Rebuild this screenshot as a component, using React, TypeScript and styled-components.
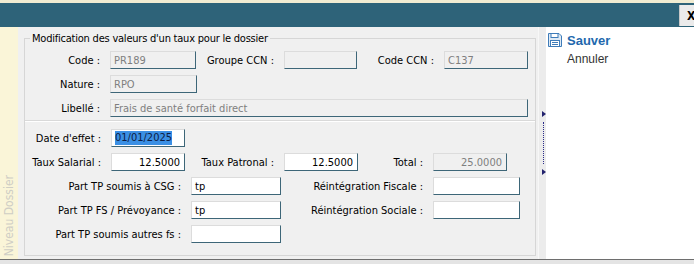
import React from 'react';
import styled, { createGlobalStyle } from 'styled-components';

const GlobalStyle = createGlobalStyle`
  html, body {
    margin: 0;
    padding: 0;
    background: #ffffff;
  }
  body {
    font-family: Tahoma, "DejaVu Sans Condensed", "DejaVu Sans", sans-serif;
    font-stretch: condensed;
    font-size: 11px;
    color: #000;
  }
`;

const Window = styled.div`
  width: 694px;
  height: 264px;
  display: flex;
  flex-direction: column;
  overflow: hidden;
`;

const TopStrip = styled.div`
  height: 3px;
  background: #f1ecd2;
`;

const TitleBar = styled.div`
  height: 24px;
  background: #2e6379;
  display: flex;
  align-items: center;
  justify-content: flex-end;
`;

const CloseButton = styled.div`
  width: 15px;
  height: 21px;
  margin-top: 1px;
  background: #ebebeb;
  border-left: 1px solid #c8c8c8;
  box-sizing: border-box;
  display: flex;
  align-items: center;
  padding-left: 7px;
  font-weight: bold;
  font-size: 12px;
  overflow: hidden;
`;

const Main = styled.div`
  height: 232px;
  display: flex;
`;

const SideTab = styled.div`
  width: 18px;
  background: #faf5d8;
  display: flex;
  flex-direction: column;
  justify-content: flex-end;
  align-items: center;
  padding-bottom: 3px;
  box-sizing: border-box;
`;

const SideLabel = styled.span`
  writing-mode: vertical-rl;
  transform: rotate(180deg);
  font-size: 12px;
  color: #cfcec5;
  white-space: nowrap;
`;

const Content = styled.div`
  width: 520px;
  background: #f0f0f0;
  padding: 5px 2px 3px 6px;
  box-sizing: border-box;
`;

const GroupBox = styled.fieldset`
  margin: 0;
  padding: 0;
  height: 100%;
  box-sizing: border-box;
  border: 1px solid #d6d6d6;
  display: flex;
  flex-direction: column;
`;

const Legend = styled.legend`
  margin-left: 5px;
  padding: 0 2px;
  line-height: 13px;
  font-size: 11px;
  letter-spacing: -0.22px;
`;

const Section = styled.div<{ $top: number }>`
  display: flex;
  flex-direction: column;
  gap: 6px;
  margin-top: ${(p) => p.$top}px;
`;

const Divider = styled.div`
  margin-top: 3px;
  border-top: 1px solid #d9d9d9;
  border-bottom: 1px solid #ffffff;
`;

const Row = styled.div`
  display: flex;
  align-items: center;
  height: 18px;
`;

const Label = styled.span<{ $w: number }>`
  width: ${(p) => p.$w}px;
  padding-right: 10px;
  box-sizing: border-box;
  text-align: right;
  white-space: nowrap;
`;

const Field = styled.div<{ $w: number; $disabled?: boolean; $right?: boolean }>`
  width: ${(p) => p.$w}px;
  height: 18px;
  box-sizing: border-box;
  border-top: 1px solid #dcdcdc;
  border-left: 1px solid #dcdcdc;
  border-right: 1px solid #3d6678;
  border-bottom: 1px solid #3d6678;
  background: ${(p) => (p.$disabled ? '#f0f0f0' : '#ffffff')};
  color: ${(p) => (p.$disabled ? '#7f7f7f' : '#000000')};
  display: flex;
  align-items: center;
  justify-content: ${(p) => (p.$right ? 'flex-end' : 'flex-start')};
  padding: 0 4px 0 3px;
  white-space: nowrap;
  overflow: hidden;
`;

const Selected = styled.span`
  background: #3b8fe4;
  color: #0d1d44;
  line-height: 14px;
`;

const Splitter = styled.div`
  width: 8px;
  background: #ececec;
  border-left: 1px solid #f7f7f7;
  box-sizing: border-box;
  display: flex;
  flex-direction: column;
  align-items: center;
  justify-content: center;
  gap: 5px;
  padding-left: 2px;
`;

const Arrow = styled.div`
  width: 0;
  height: 0;
  border-top: 3.5px solid transparent;
  border-bottom: 3.5px solid transparent;
  border-left: 4px solid #23236e;
`;

const Dots = styled.div`
  height: 42px;
  border-left: 1px dotted #2b2b8a;
  margin-right: 1px;
`;

const ActionPanel = styled.div`
  flex: 1;
  background: #ffffff;
  padding: 6px 0 0 2px;
  display: flex;
  flex-direction: column;
  gap: 5px;
`;

const Action = styled.div<{ $primary?: boolean }>`
  display: flex;
  align-items: center;
  gap: 5px;
  height: 14px;
  font-family: "Liberation Sans", Arial, sans-serif;
  font-stretch: normal;
  font-size: ${(p) => (p.$primary ? 13 : 12)}px;
  font-weight: ${(p) => (p.$primary ? 'bold' : 'normal')};
  color: ${(p) => (p.$primary ? '#2268ad' : '#333333')};
  padding-left: ${(p) => (p.$primary ? 0 : 19)}px;
`;

const StatusBar = styled.div`
  flex: 1;
  background: #e4e4e4;
  border-top: 1px solid #6e6e6e;
`;

const FloppyIcon = () => (
  <svg width="14" height="14" viewBox="0 0 14 14">
    <path d="M0.5 0.5 H11 L13.5 3 V13.5 H0.5 Z" fill="#dfeaf5" stroke="#3f7cb9" />
    <rect x="3" y="0.5" width="7" height="4" fill="#ffffff" stroke="#3f7cb9" />
    <rect x="2.5" y="7.5" width="9" height="6" fill="#ffffff" stroke="#3f7cb9" />
    <line x1="4" y1="9.5" x2="10" y2="9.5" stroke="#3f7cb9" />
    <line x1="4" y1="11.5" x2="10" y2="11.5" stroke="#3f7cb9" />
  </svg>
);

export default function App() {
  return (
    <>
      <GlobalStyle />
      <Window>
        <TopStrip />
        <TitleBar>
          <CloseButton>X</CloseButton>
        </TitleBar>
        <Main>
          <SideTab>
            <SideLabel>Niveau Dossier</SideLabel>
          </SideTab>
          <Content>
            <GroupBox>
              <Legend>Modification des valeurs d'un taux pour le dossier</Legend>
              <Section $top={6}>
                <Row>
                  <Label $w={85}>Code :</Label>
                  <Field $w={86} $disabled>PR189</Field>
                  <Label $w={88}>Groupe CCN :</Label>
                  <Field $w={73} $disabled />
                  <Label $w={87}>Code CCN :</Label>
                  <Field $w={84} $disabled>C137</Field>
                </Row>
                <Row>
                  <Label $w={85}>Nature :</Label>
                  <Field $w={87} $disabled>RPO</Field>
                </Row>
                <Row>
                  <Label $w={85}>Libellé :</Label>
                  <Field $w={418} $disabled>Frais de santé forfait direct</Field>
                </Row>
              </Section>
              <Divider />
              <Section $top={7}>
                <Row>
                  <Label $w={86}>Date d'effet :</Label>
                  <Field $w={74}>
                    <Selected>01/01/2025</Selected>
                  </Field>
                </Row>
                <Row>
                  <Label $w={86}>Taux Salarial :</Label>
                  <Field $w={74} $right>12.5000</Field>
                  <Label $w={99}>Taux Patronal :</Label>
                  <Field $w={74} $right>12.5000</Field>
                  <Label $w={75}>Total :</Label>
                  <Field $w={74} $right $disabled>25.0000</Field>
                </Row>
                <Row>
                  <Label $w={166}>Part TP soumis à CSG :</Label>
                  <Field $w={90}>tp</Field>
                  <Label $w={152}>Réintégration Fiscale :</Label>
                  <Field $w={87} />
                </Row>
                <Row>
                  <Label $w={166}>Part TP FS / Prévoyance :</Label>
                  <Field $w={90}>tp</Field>
                  <Label $w={152}>Réintégration Sociale :</Label>
                  <Field $w={87} />
                </Row>
                <Row>
                  <Label $w={166}>Part TP soumis autres fs :</Label>
                  <Field $w={90} />
                </Row>
              </Section>
            </GroupBox>
          </Content>
          <Splitter>
            <Arrow />
            <Dots />
            <Arrow />
          </Splitter>
          <ActionPanel>
            <Action $primary>
              <FloppyIcon />
              Sauver
            </Action>
            <Action>Annuler</Action>
          </ActionPanel>
        </Main>
        <StatusBar />
      </Window>
    </>
  );
}
